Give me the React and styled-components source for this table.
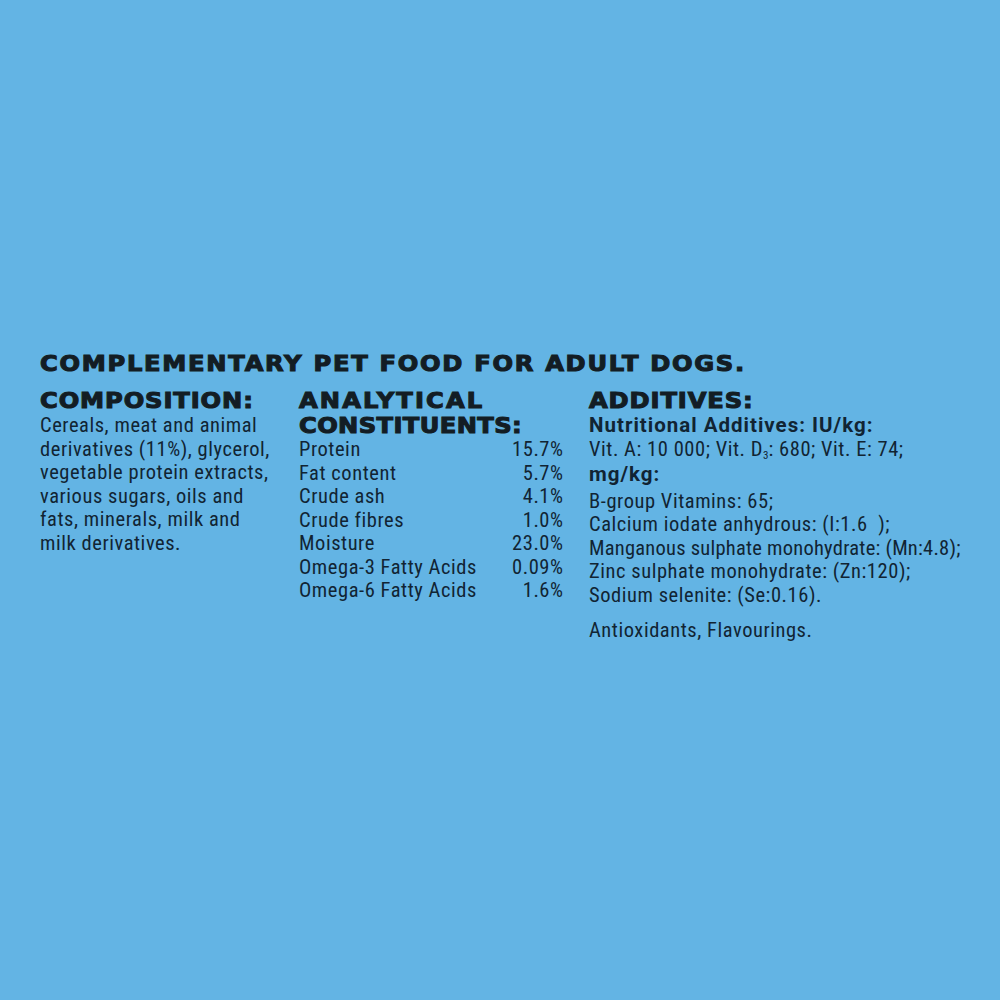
import styled, { createGlobalStyle } from 'styled-components'

const Global = createGlobalStyle`
  html, body { margin: 0; padding: 0; }
  body { background: #63b4e4; }
`

const Label = styled.section`
  box-sizing: border-box;
  width: 1000px;
  height: 1000px;
  overflow: hidden;
  padding: 351px 0 0 40px;
  color: #112433;
  font-family: "Roboto Condensed", "Liberation Sans Narrow", sans-serif;
`

// wide, heavy caps: DejaVu bold, stretched a little
const Title = styled.h1`
  width: max-content;
  margin: 0;
  color: #131d24;
  font-family: "DejaVu Sans", "Liberation Sans", sans-serif;
  font-weight: 700;
  font-size: 22px;
  line-height: 25px;
  letter-spacing: ${p => p.$spacing || '0.8px'};
  -webkit-text-stroke: 1.1px #131d24;
  white-space: nowrap;
  transform: scaleX(1.1);
  transform-origin: left center;
`

const Heading = styled(Title).attrs({ as: 'h2' })`
  line-height: 25px;
`

const Columns = styled.div`
  display: grid;
  grid-template-columns: 233px 264px auto;
  column-gap: 26px;
  margin-top: 12px;
`

const Column = styled.div`
  display: flex;
  flex-direction: column;
  align-items: stretch;
`

const Body = styled.div`
  margin-top: 1px;
  font-size: 20.5px;
  line-height: 23.5px;
  letter-spacing: 0.55px;
  white-space: nowrap;
`

const Line = styled.div`
  margin-top: ${p => p.$gap || 0}px;
  letter-spacing: ${p => (p.$tight ? '0.24px' : 'inherit')};
`

const BoldLine = styled(Line)`
  font-family: Roboto, "Liberation Sans", sans-serif;
  font-weight: 700;
  letter-spacing: 1px;
`

const Sub = styled.sub`
  font-size: 11px;
  line-height: 0;
  vertical-align: -3px;
  letter-spacing: 0;
`

const Table = styled.div`
  display: grid;
  grid-template-columns: 1fr auto;
  font-size: 20.5px;
  line-height: 23.5px;
  letter-spacing: 0.55px;
  white-space: nowrap;
`

const Value = styled.span`
  text-align: right;
  margin-right: -0.55px;
`

const compositionLines = [
  'Cereals, meat and animal',
  'derivatives (11%), glycerol,',
  'vegetable protein extracts,',
  'various sugars, oils and',
  'fats, minerals, milk and',
  'milk derivatives.',
]

const constituents = [
  ['Protein', '15.7%'],
  ['Fat content', '5.7%'],
  ['Crude ash', '4.1%'],
  ['Crude fibres', '1.0%'],
  ['Moisture', '23.0%'],
  ['Omega-3 Fatty Acids', '0.09%'],
  ['Omega-6 Fatty Acids', '1.6%'],
]

const traceElements = [
  { text: 'Calcium iodate anhydrous: (I:1.6\u00a0\u00a0);' },
  { text: 'Manganous sulphate monohydrate: (Mn:4.8);', tight: true },
  { text: 'Zinc sulphate monohydrate: (Zn:120);' },
  { text: 'Sodium selenite: (Se:0.16).' },
]

export default function App() {
  return (
    <>
      <Global />
      <Label>
        <Title $spacing="1.55px">COMPLEMENTARY PET FOOD FOR ADULT DOGS.</Title>
        <Columns>
          <Column>
            <Heading>COMPOSITION:</Heading>
            <Body>
              {compositionLines.map(line => (
                <Line key={line}>{line}</Line>
              ))}
            </Body>
          </Column>
          <Column>
            <Heading $spacing="1.9px">ANALYTICAL</Heading>
            <Heading $spacing="0.35px">CONSTITUENTS:</Heading>
            <Table>
              {constituents.map(([name, value]) => (
                <>
                  <span key={name}>{name}</span>
                  <Value key={name + value}>{value}</Value>
                </>
              ))}
            </Table>
          </Column>
          <Column>
            <Heading>ADDITIVES:</Heading>
            <Body>
              <BoldLine>Nutritional Additives: IU/kg:</BoldLine>
              <Line>
                Vit. A: 10 000; Vit. D<Sub>3</Sub>: 680; Vit. E: 74;
              </Line>
              <BoldLine $gap={2}>mg/kg:</BoldLine>
              <Line $gap={3}>B-group Vitamins: 65;</Line>
              {traceElements.map(item => (
                <Line key={item.text} $tight={item.tight}>{item.text}</Line>
              ))}
              <Line $gap={11.5}>Antioxidants, Flavourings.</Line>
            </Body>
          </Column>
        </Columns>
      </Label>
    </>
  )
}
